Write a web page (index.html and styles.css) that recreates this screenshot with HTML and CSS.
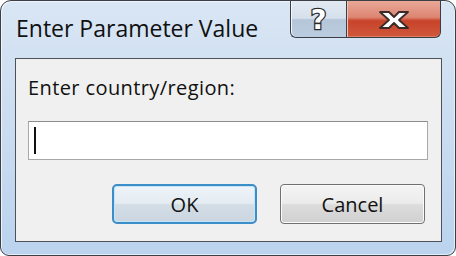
FILE: index.html
```html
<!DOCTYPE html>
<html lang="en">
<head>
    <meta charset="UTF-8">
    <title>Enter Parameter Value</title>
    <link rel="stylesheet" href="styles.css">
</head>
<body>
    <div class="window">
        <div class="titlebar">
            <span class="title">Enter Parameter Value</span>
            <div class="caption-btns">
                <div class="cap-btn help"><span class="help-glyph">?</span></div>
                <div class="cap-btn close">
                    <svg width="34" height="20" viewBox="0 0 34 20">
                        <path d="M3 2 L12 2 L17 7 L22 2 L31 2 L22 10 L31 18 L22 18 L17 13 L12 18 L3 18 L12 10 Z" fill="#fff" stroke="#3a2a28" stroke-width="1.8" stroke-linejoin="round"/>
                    </svg>
                </div>
            </div>
        </div>

        <div class="client">
            <label class="prompt">Enter country/region:</label>
            <div class="textbox"><span class="caret"></span></div>
            <div class="buttons">
                <button class="btn default">OK</button>
                <button class="btn">Cancel</button>
            </div>
        </div>
    </div>
</body>
</html>
```

FILE: styles.css
```css
body {
    margin: 0;
    background-color: #ffffff;
    font-family: "Open Sans", "Noto Sans", sans-serif;
}

.window {
    width: 456px;
    height: 256px;
    box-sizing: border-box;
    border: 1px solid #3c3f44;
    border-radius: 11px 11px 9px 9px;
    background: linear-gradient(to bottom, #d9e6f4 0%, #cddef1 40%, #bbd3ee 100%);
    box-shadow: inset 1px 1px 0 #eef4fb, inset -1px -1px 0 #e4eef9;
    padding: 0 13px 13px 14px;
    display: flex;
    flex-direction: column;
}

.titlebar {
    height: 57px;
    display: flex;
    justify-content: space-between;
    align-items: flex-start;
}

.title {
    font-size: 23px;
    color: #101010;
    margin-top: 11px;
    margin-left: 1px;
}

.caption-btns {
    display: flex;
    margin-right: 1px;
}

.cap-btn {
    height: 37px;
    box-sizing: border-box;
    border: 1px solid #3b3e44;
    border-top: none;
    display: flex;
    align-items: center;
    justify-content: center;
}

.help {
    width: 56px;
    border-right: none;
    border-radius: 0 0 0 6px;
    background: linear-gradient(to bottom, #e2eaf3 0%, #d5e0ec 48%, #b5c6d9 52%, #bccce0 100%);
    box-shadow: inset 1px 0 0 #f4f8fc;
}

.help-glyph {
    font-family: "DejaVu Sans", sans-serif;
    font-weight: bold;
    font-size: 27px;
    line-height: 1;
    color: #ffffff;
    -webkit-text-stroke: 2.5px #2a2a2a;
    paint-order: stroke fill;
    margin-top: 1px;
}

.close {
    width: 95px;
    border-radius: 0 0 6px 0;
    background: linear-gradient(to bottom, #e9a797 0%, #dd8672 45%, #c8432a 55%, #d0583c 100%);
    box-shadow: inset 1px 0 0 #f3c5b8, inset 0 -1px 0 #e07a60;
}

.close svg {
    margin-top: 1px;
}

.client {
    flex: 1;
    background-color: #f0f0f0;
    border: 1px solid #4e5157;
    padding: 16px 13px 0 12px;
    display: flex;
    flex-direction: column;
}

.prompt {
    font-size: 20px;
    letter-spacing: 0.4px;
    color: #111111;
    line-height: 26px;
}

.textbox {
    margin-top: 20px;
    height: 39px;
    box-sizing: border-box;
    background-color: #ffffff;
    border: 1px solid #a6a8ab;
    border-top-color: #8a8c90;
    position: relative;
}

.caret {
    position: absolute;
    left: 5px;
    top: 5px;
    width: 2px;
    height: 27px;
    background-color: #111111;
}

.buttons {
    margin-top: 24px;
    display: flex;
    justify-content: flex-end;
    gap: 23px;
    padding-right: 3px;
}

.btn {
    width: 145px;
    height: 40px;
    box-sizing: border-box;
    font-family: "Open Sans", "Noto Sans", sans-serif;
    font-size: 20px;
    color: #111111;
    border: 1px solid #707070;
    border-radius: 4px;
    background: linear-gradient(to bottom, #f4f4f4 0%, #ebebeb 48%, #dcdcdc 52%, #d0d0d0 100%);
    box-shadow: inset 0 0 0 1px #fbfbfb;
    padding: 0;
}

.btn.default {
    border: 2px solid #3c8ec8;
    border-radius: 5px;
    background: linear-gradient(to bottom, #eef4f9 0%, #e4ebf1 48%, #d3dde6 52%, #cbd6e0 100%);
    box-shadow: inset 0 0 0 1px #c6e4f7;
}
```
